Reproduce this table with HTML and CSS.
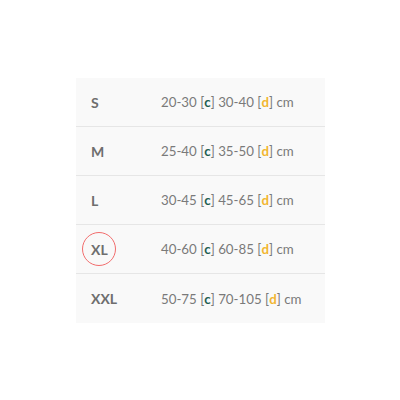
FILE: index.html
```html
<!DOCTYPE html>
<html>
<head>
<meta charset="utf-8">
<link rel="stylesheet" href="styles.css">
</head>
<body>
<div class="sizes">
  <div class="row"><div class="label">S</div><div class="value">20-30 [<b class="c">c</b>] 30-40 [<b class="d">d</b>] cm</div></div>
  <div class="row"><div class="label">M</div><div class="value">25-40 [<b class="c">c</b>] 35-50 [<b class="d">d</b>] cm</div></div>
  <div class="row"><div class="label">L</div><div class="value">30-45 [<b class="c">c</b>] 45-65 [<b class="d">d</b>] cm</div></div>
  <div class="row"><div class="label"><span class="circled">XL</span></div><div class="value">40-60 [<b class="c">c</b>] 60-85 [<b class="d">d</b>] cm</div></div>
  <div class="row last"><div class="label">XXL</div><div class="value">50-75 [<b class="c">c</b>] 70-105 [<b class="d">d</b>] cm</div></div>
</div>
</body>
</html>
```
FILE: styles.css
```css
html, body {
  margin: 0;
  padding: 0;
  background: #ffffff;
}
body {
  font-family: Lato, "Open Sans", sans-serif;
  padding: 78px 0 0 76px;
}
.sizes {
  width: 249px;
  background: #f9f9f9;
  display: flex;
  flex-direction: column;
}
.row {
  display: grid;
  grid-template-columns: 85px 1fr;
  align-items: center;
  height: 48px;
  border-bottom: 1px solid #e6e6e6;
}
.row.last {
  border-bottom: none;
  height: 49px;
}
.label {
  padding-left: 15px;
  font-size: 14px;
  font-weight: 700;
  color: #6e6e6e;
}
.value {
  font-size: 13.3px;
  color: #7a7a7a;
}
.c {
  color: #1d5e50;
  font-weight: 700;
}
.d {
  color: #f2b632;
  font-weight: 700;
}
.circled {
  position: relative;
  display: inline-block;
}
.circled::after {
  content: "";
  position: absolute;
  left: 50%;
  top: 50%;
  width: 32px;
  height: 32px;
  margin: -17.5px 0 0 -17.5px;
  border: 1.5px solid #f26d6d;
  border-radius: 50%;
}
```
